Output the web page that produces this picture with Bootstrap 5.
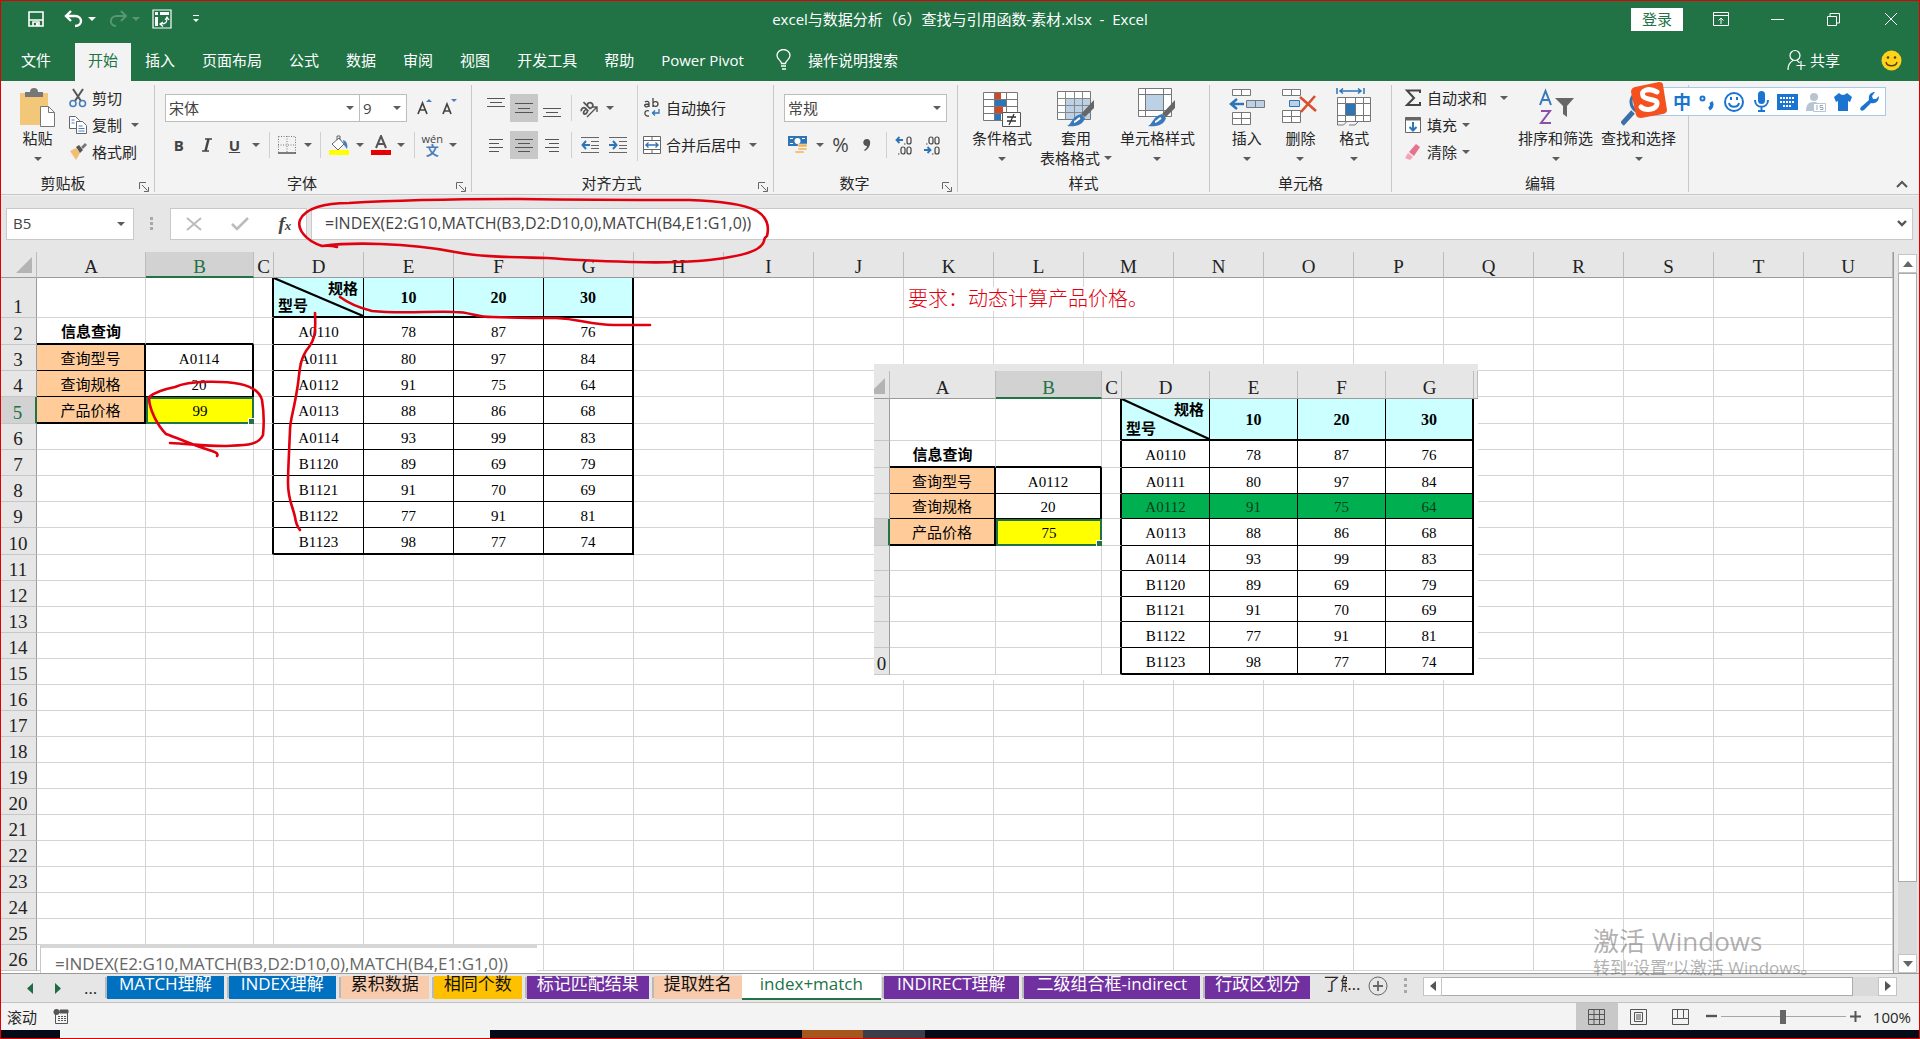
<!DOCTYPE html>
<html lang="zh-CN">
<head>
<meta charset="utf-8">
<meta name="viewport" content="width=device-width, initial-scale=1">
<title>excel与数据分析（6）查找与引用函数-素材.xlsx - Excel</title>
<link href="https://cdn.jsdelivr.net/npm/bootstrap@5.3.0/dist/css/bootstrap.min.css" rel="stylesheet">
<style>
:root{--xl:#217346;--chrome:#e6e6e6;--rib:#f3f3f3;--ink:#e0000f;}
body{font-family:"Open Sans","Noto Sans CJK SC",sans-serif;font-size:15px;line-height:20px;color:#262626;background:var(--chrome);overflow:hidden}
button,input,select{font:inherit;color:inherit}
button{background:none;border:0;padding:0;white-space:nowrap}
svg{display:block;flex:none}
.frame{border:1px solid #e00000;inset:0;z-index:40;pointer-events:none}
/* title bar */
.titlebar{background:var(--xl);color:#fff;height:38px;padding:0 22px 0 28px}
.titlebar .side{flex:1 1 0}
.titlebar .mid{margin:0 6px 0 0}
.signin{background:#fff;color:var(--xl);width:52px;height:23px;line-height:22px;margin-right:30px}
.winbtn{width:57px;height:30px}
.down{display:inline-block;border:4px solid transparent;border-top-color:currentColor;border-bottom:0;width:0;height:0;flex:none}
/* ribbon tabs */
.tabs{background:var(--xl);height:43px;padding:5px 18px 0 0;gap:1px}
.tabs a,.tabs .tell{color:#fff;text-decoration:none;padding:0 13px 4px;height:38px;display:flex;align-items:center}
.tabs a:first-child{padding:0 22px 4px 21px;margin-right:1px}
.tabs a.on{background:var(--rib);color:var(--xl)}
.tabs .share{margin-right:14px}
/* ribbon */
.ribbon{background:var(--rib);height:114px;border-bottom:1px solid #c6c6c6;padding:4px 0 2px}
.group{display:flex;flex-direction:column;position:relative;border-right:1px solid #c8c8c8;padding:0 10px}
.group .body{flex:1;display:flex}
.group .cap{text-align:center;height:18px;line-height:18px}
.launch{position:absolute;right:5px;bottom:0}
.g-clip{width:155px;padding-left:4px}.g-font{width:317px}.g-align{width:302px}.g-num{width:184px}
.g-font .cap,.g-align .cap,.g-num .cap,.g-clip .cap{padding-right:22px}
.g-style{width:252px}.g-cell{width:182px}.g-edit{width:297px}
.big{display:flex;flex-direction:column;align-items:center;padding-top:3px;color:#262626}
.big svg{margin-bottom:1px}
.big .down{margin-top:9px}
.down{color:#5c5c5c}.titlebar .down{color:#fff}
.stack3{margin-top:-1px}
.g-clip .stack3{margin-left:-2px}
.g-edit .stack3{width:106px;margin-left:2px;margin-right:8px}
.stack3 button{display:flex;align-items:center;height:27px;gap:5px}
.rows{display:flex;flex-direction:column;gap:9px;padding-top:9px}
.line{display:flex;height:28px;align-items:center}
.tool{width:28px;height:28px;display:flex;align-items:center;justify-content:center;color:#444}
.tool.w26{width:26px}.tool.car{width:16px}
.tool.hit{background:#c8c8c8}
.tool.pinyin{font-size:11px;line-height:9px}
.pinyin b{color:#4a7ebb;font-size:13px;line-height:14px}
.vsep{width:10px;height:26px;background:linear-gradient(#d0d0d0,#d0d0d0) center/1px 100% no-repeat;flex:none}
.vsep.tall{height:76px}
.pick{position:relative;height:28px;background:#fff;border:1px solid #bdbdbd;color:#444;flex:none}
.pick.face{width:195px}.pick.size{width:47px}
.pick select{appearance:none;border:0;background:none;width:100%;height:26px;padding:0 3px;outline:0}
.pick .down{position:absolute;right:5px;top:11px;pointer-events:none}
.pick+.pick{border-left:0}
/* formula bar */
.fbar{background:var(--chrome);padding:12px 7px 12px 6px;height:57px;border-top:1px solid #f0f0f0}
.fbox{background:#fff;border:1px solid #c9c9c9;height:32px;color:#444}
.fbox input{border:0;background:none;outline:0;width:100%;padding:0 0 2px 6px}
.fname{width:128px}.fbtns{width:137px}.ftext input{padding-left:13px;font-size:16px}
.fx{font:italic bold 19px "Liberation Serif",serif}.fx span{font-size:13px}
/* worksheet */
.sheet{position:relative;min-height:0;background:var(--chrome)}
.cells{position:relative;overflow:hidden;background:#fff;min-width:0;border-right:1px solid #9b9b9b}
.grid{table-layout:fixed;width:100%;border-collapse:separate;border-spacing:0;font-family:"Liberation Serif","Noto Sans CJK SC",serif;font-size:15px;line-height:18px;color:#000}
.grid td,.grid th{padding:0;border:0 solid #d4d4d4;border-width:0 1px 1px 0;text-align:center;vertical-align:middle;white-space:nowrap;font-weight:400;position:relative}
.grid td{padding-top:2px}
.grid thead th{background:var(--chrome);border-color:#b5b5b5 #bcbcbc #9b9b9b;font-size:19px;line-height:20px;vertical-align:bottom;color:#222}
.grid tbody th{background:var(--chrome);border-color:#c6c6c6 #9b9b9b #c6c6c6;font-size:19px;line-height:20px;vertical-align:bottom;color:#222}
.grid thead th.cur{background:#d2d2d2;color:var(--xl);border-bottom:2px solid var(--xl);line-height:19px}
.grid tbody th.cur{background:#d2d2d2;color:var(--xl);border-right:2px solid var(--xl)}
.grid .corner::after{content:"";position:absolute;right:4px;bottom:4px;border:8px solid transparent;border-right-color:#b4b4b4;border-bottom-color:#b4b4b4}
.grid td.t{border-color:#000}
.grid td.rt{border-right:2px solid #000}
.grid td.bt{border-bottom:2px solid #000}
.grid td.hd{background:#cff;font-weight:700;font-size:16px}
.grid td.or{background:#fc9}
.grid td.ye{background:#ff0;border:2px solid var(--xl);padding:0}
.grid td.ye::after{content:"";position:absolute;right:-3px;bottom:-3px;width:5px;height:5px;background:var(--xl);border:1px solid #fff;box-sizing:content-box}
.grid td.gr{background:#00b050;color:#0b3a1c}
.grid td.ttl{font-weight:700;border-bottom:2px solid #000}
.diag svg{position:absolute;inset:0;width:100%;height:100%}
.diag .up{position:absolute;right:5px;top:2px;font-size:15px}
.diag .lo{position:absolute;left:4px;bottom:1px;font-size:15px}
.grid td.ask{color:var(--ink);font-size:20px;font-weight:300;text-align:left;overflow:visible}
.ask span{position:absolute;left:4px;top:9px;background:#fff;line-height:24px;width:240px;z-index:1}
.shot{position:absolute;left:874px;top:112px;width:604px;background:#fff;border-top:7px solid var(--chrome);padding-bottom:5px;z-index:2;overflow:hidden}
.fshot{position:absolute;left:40px;top:692px;width:497px;height:40px;background:#fff;border-top:4px solid #d6d6d6;border-left:1px solid #c9c9c9;z-index:2;color:#666;font:17px/24px "Open Sans",sans-serif;padding:4px 0 0 14px;white-space:nowrap}
.vbar{width:26px;padding:2px 3px 0 4px}
.sbtn{background:#fff;border:1px solid #c4c4c4;width:19px;height:19px;display:flex;align-items:center;justify-content:center;flex:none;color:#666}
.vthumb{background:#fff;border:1px solid #ababab;flex:610 0 0}.vtrack{background:#dadada;flex:72 0 0}
/* sheet tabs */
.stabs{background:var(--chrome);height:30px;border-top:1px solid #9b9b9b;border-bottom:1px solid #c2c2c2;padding:0 23px 0 26px;font-size:17px}
.stabs .nav3{width:81px;gap:22px}
.stabs .tab{height:23px;line-height:15px;margin-top:2px;color:#fff;text-decoration:none;text-align:center;margin-right:5px;white-space:nowrap;padding:0 10px;box-shadow:-3px 0 0 -1px #b9b9b9;flex:none}
.stabs .blue{background:#0070c0;padding:0 12px}.stabs .peach{background:#f8cbad;color:#111}.stabs .gold{background:#ffc000;color:#111}.stabs .violet{background:#7030a0}.stabs .tab.wide{padding:0 13px}
.stabs .tab.now{background:#fff;color:var(--xl);margin:0 3px 0 -5px;height:26px;line-height:19px;border-bottom:2px solid var(--xl);padding:0 18px;box-shadow:none}
.stabs .cut{width:24px;line-height:20px;margin-left:8px;overflow:hidden;white-space:nowrap}
.hthumb{background:#fff;border:1px solid #ababab;border-left:0;height:19px;flex:401 0 0}.htrack{background:#dadada;height:19px;flex:25 0 0}
.status{background:var(--rib);height:27px;padding:0 9px 0 7px}
.vbtn{width:42px;height:27px;display:flex;align-items:center;justify-content:center;color:#555}
.vbtn.on{background:#c8c8c8}
.zoomer{appearance:none;width:125px;height:17px;background:linear-gradient(#a6a6a6,#a6a6a6) center/100% 1px no-repeat;margin:0 4px}
.zoomer::-webkit-slider-thumb{appearance:none;width:6px;height:14px;background:#666}
.taskbar{height:9px;background:#050a18}
.taskbar span{height:9px}
.taskbar .t1{width:60px}.taskbar .t2{width:430px;background:#eef4f4}.taskbar .t3{width:312px}.taskbar .t4{width:61px;background:#a4561c}.taskbar .t5{width:62px;background:#3b3d4a}
.ime{position:absolute;left:1630px;top:82px;z-index:20;color:#1b75d0}
.ime .strip{background:#fff;border:1px solid #a9c9ec;height:29px;margin:5px 0 0 -20px;padding:0 6px 0 24px;width:238px;font-weight:700;font-size:18px}
.wm{position:absolute;left:1593px;top:924px;z-index:30;color:rgba(110,110,110,.55);pointer-events:none}
.wm .a{font-size:26px;line-height:34px}.wm .b{font-size:17px;line-height:20px}
.marks{position:absolute;left:0;top:0;width:100%;height:100%;z-index:25;pointer-events:none;fill:none;stroke:var(--ink);stroke-width:2.6;stroke-linecap:round;stroke-linejoin:round}
</style>
<script src="https://cdn.jsdelivr.net/npm/bootstrap@5.3.0/dist/js/bootstrap.bundle.min.js"></script>
</head>
<body class="vh-100 d-flex flex-column position-relative">
<header>
 <div class="titlebar d-flex align-items-center">
  <div class="side d-flex align-items-center">
   <button aria-label="保存" class="me-3"><svg width="16" height="16" fill="none" stroke="#fff" stroke-width="1.6"><path d="M1 1h14v14H1zM1 9h14M5 15v-4h6v4"/><path d="M8 12h2v3H8z" fill="#fff" stroke="none"/></svg></button>
   <button aria-label="撤消" class="ms-1"><svg width="20" height="18" fill="none" stroke="#fff" stroke-width="2.4"><path d="M7 1 2 6l5 5M2 6h9c8 0 8 10 0 10"/></svg></button>
   <span class="down ms-1"></span>
   <button aria-label="恢复" class="ms-2 ps-1 opacity-25"><svg width="20" height="18" fill="none" stroke="#fff" stroke-width="2"><path d="M13 1l5 5-5 5M18 6H9C1 6 1 16 8 16"/></svg></button>
   <span class="down ms-1 opacity-25"></span>
   <button aria-label="数据透视表" class="ms-2 ps-1"><svg width="20" height="20" fill="none" stroke="#fff" stroke-width="1.2"><path d="M1 1h18v18H1z"/><path d="M3 3h3v3H3zM8 3h9v3H8zM3 8h3v9H3z" fill="#fff" stroke="none"/><path d="M15 9c0 4-1 6-6 6M13 11l2-3 2 3M11 13l-3 2 3 2.500"/></svg></button>
   <button aria-label="自定义快速访问工具栏" class="ms-3 ps-1"><svg width="8" height="9" fill="#fff"><path d="M1 0h6v1H1zM1 4h6L4 7z"/></svg></button>
  </div>
  <div class="mid">excel与数据分析（6）查找与引用函数-素材.xlsx&nbsp; -&nbsp; Excel</div>
  <div class="side d-flex align-items-center justify-content-end">
   <button class="signin">登录</button>
   <button class="winbtn" aria-label="功能区显示选项"><svg width="16" height="14" fill="none" stroke="#fff"><path d="M.5.500h15v13H.500zM.500 3.500h15M8 12V6M5.500 8.500 8 6l2.500 2.500"/></svg></button>
   <button class="winbtn" aria-label="最小化"><svg width="14" height="14" stroke="#fff"><path d="M1 7.500h13"/></svg></button>
   <button class="winbtn" aria-label="还原"><svg width="13" height="13" fill="none" stroke="#fff"><path d="M.500 3.500h9v9h-9zM3 3V.500h9.500v9.500H10"/></svg></button>
   <button aria-label="关闭"><svg width="14" height="14" stroke="#fff"><path d="M1 1l12 12M13 1 1 13"/></svg></button>
  </div>
 </div>
 <nav class="tabs d-flex">
  <a href="#">文件</a><a href="#" class="on">开始</a><a href="#">插入</a><a href="#">页面布局</a><a href="#">公式</a><a href="#">数据</a><a href="#">审阅</a><a href="#">视图</a><a href="#">开发工具</a><a href="#">帮助</a><a href="#">Power Pivot</a>
  <button class="tell ps-3"><svg class="me-2 pe-1" width="26" height="22" fill="none" stroke="#fff" stroke-width="1.300"><path d="M7.500 14.500c0-3-4.500-4-4.500-8a6.500 6 0 0 1 13 0c0 4-4.500 5-4.500 8zM7 17h5M8 20h4"/></svg>操作说明搜索</button>
  <button class="tell share ms-auto"><svg class="me-1" width="19" height="22" fill="none" stroke="#fff" stroke-width="1.200"><circle cx="8" cy="6.500" r="5"/><path d="M1 21c0-5 2-8 5-9.500M10 11.500c1 .5 2 1.500 2.500 2.500M14 12v9M9.500 16.500h9"/></svg>共享</button>
  <button class="tell pe-0" aria-label="反馈"><svg width="21" height="21"><circle cx="10.500" cy="10.500" r="10" fill="#ffd21c"/><path d="M5 12c1 5 10 5 11 0" fill="none" stroke="#5a4000" stroke-width="1.400"/><circle cx="7" cy="7.500" r="1.300" fill="#5a4000"/><circle cx="14" cy="7.500" r="1.300" fill="#5a4000"/></svg></button>
 </nav>
 <div class="ribbon d-flex">
  <section class="group g-clip"><div class="body">
   <button class="big px-3"><svg width="35" height="39"><path d="M0 5h28v32H0z" fill="#f2c777"/><path d="M5 9V4h5a4 4 0 0 1 8 0h5v5z" fill="#777"/><path d="M20.500 18.500h8l6 6v14h-14z" fill="#fff" stroke="#777"/><path d="M28.500 18.500v6h6" fill="none" stroke="#777"/></svg>粘贴<span class="down"></span></button>
   <div class="stack3">
    <button><svg width="18" height="20" fill="none"><path d="M4 1l8 12M14 1 6 13" stroke="#555" stroke-width="2"/><circle cx="4" cy="15.500" r="3" stroke="#4a7ebb" stroke-width="1.600"/><circle cx="13.500" cy="15.500" r="3" stroke="#4a7ebb" stroke-width="1.600"/></svg>剪切</button>
    <button><svg width="18" height="18" fill="#fff" stroke="#666"><path d="M.500.500h6l4 4v8H.500z"/><path d="M7.500 5.500h6l4 4v8h-10z"/><path d="M2.500 4h3M2.500 7h3M9.500 10h4M9.500 12.500h6M9.500 15h6" stroke="#4a7ebb"/></svg>复制<span class="down ms-1"></span></button>
    <button><svg width="18" height="17"><path d="M1 8l6-3 4 5-4 7z" fill="#f0c070"/><path d="M7 4l3-2 4 5-3 3z" fill="#555"/><path d="M12 4l4-4 2 2-4 4z" fill="#777"/></svg>格式刷</button>
   </div></div>
   <div class="cap">剪贴板</div><svg class="launch" width="10" height="10" fill="none" stroke="#666"><path d="M.500 7V.500H7M3 3l5.500 5.500M9.500 5v4.500H5"/></svg>
  </section>
  <section class="group g-font"><div class="body rows">
   <div class="line"><div class="pick face"><select aria-label="字体"><option>宋体</option></select><span class="down"></span></div><div class="pick size"><select aria-label="字号"><option>9</option></select><span class="down"></span></div>
    <button class="tool ms-1" aria-label="增大字号"><svg width="18" height="20" fill="none" stroke="#444" stroke-width="1.700"><path d="M3 16 7.500 5 12 16M4.500 12h6"/><path d="M11 4l3-3 3 3z" fill="#4a7ebb" stroke="none"/></svg></button>
    <button class="tool" aria-label="减小字号"><svg width="18" height="20" fill="none" stroke="#444" stroke-width="1.700"><path d="M3 16 7 6l4 10M4.500 13h5"/><path d="M11 1h6l-3 3z" fill="#4a7ebb" stroke="none"/></svg></button></div>
   <div class="line"><button class="tool fw-bold">B</button><button class="tool" aria-label="倾斜"><svg width="12" height="14" fill="none" stroke="#444"><path d="M4 1h7M1 13h7" stroke-width="1.300"/><path d="M7.500 1l-3 12" stroke-width="2.400"/></svg></button><button class="tool fw-bold text-decoration-underline">U</button><button class="tool car" aria-label="下划线选项"><span class="down"></span></button><span class="vsep"></span>
    <button class="tool w26" aria-label="边框"><svg width="18" height="18" stroke="#777" fill="none"><path d="M.500.500h17v17M.500.500v17M9 0v17M0 9h17" stroke-dasharray="1 1.500"/><path d="M0 17h18" stroke="#555" stroke-width="1.500"/></svg></button><button class="tool car" aria-label="边框选项"><span class="down"></span></button><span class="vsep"></span>
    <button class="tool w26" aria-label="填充颜色"><svg width="22" height="20"><path d="M4 9l7-6 5 6-6 6z" fill="#fff" stroke="#666"/><path d="M9 5V1h3v4" fill="none" stroke="#666"/><path d="M15 5c4 1 5 5 4 9l-3-4z" fill="#4a7ebb"/><path d="M1 15h20v5H1z" fill="#ff0"/></svg></button><button class="tool car" aria-label="填充选项"><span class="down"></span></button>
    <button class="tool w26" aria-label="字体颜色"><svg width="22" height="20"><path d="M6 13 11 1l5 12M8 9h6" fill="none" stroke="#555" stroke-width="2"/><path d="M1 15h20v5H1z" fill="#e60000"/></svg></button><button class="tool car" aria-label="颜色选项"><span class="down"></span></button><span class="vsep"></span>
    <button class="tool w26 flex-column pinyin">wén<b>文</b></button><button class="tool car" aria-label="拼音选项"><span class="down"></span></button></div></div>
   <div class="cap">字体</div><svg class="launch" width="10" height="10" fill="none" stroke="#666"><path d="M.500 7V.500H7M3 3l5.500 5.500M9.500 5v4.500H5"/></svg>
  </section>
  <section class="group g-align"><div class="body">
   <div class="rows">
    <div class="line"><button class="tool" aria-label="顶端对齐"><svg width="18" height="20" stroke="#555"><path d="M0 .500h18M3 4.500h12M0 8.500h18"/></svg></button><button class="tool hit" aria-label="垂直居中"><svg width="18" height="11" stroke="#555"><path d="M0 .500h18M3 5.500h12M0 9.500h18"/></svg></button><button class="tool" aria-label="底端对齐"><svg width="18" height="20" stroke="#555"><path d="M0 10.500h18M3 14.500h12M0 18.500h18"/></svg></button><span class="vsep"></span>
     <button class="tool w26" aria-label="方向"><svg width="20" height="20" fill="none" stroke="#555" stroke-width="1.700"><g transform="rotate(-45 8 9)"><path d="M1 8c1-2 5-2 5 1v4M6 10c-6-1-6 3-3 3 2 0 3-1 3-2M9 3v10M9 9c1-3 5-2 5 1s-4 4-5 1"/></g><path d="M8 19 18 9M18 14V9h-5" stroke-width="1.400"/></svg></button><button class="tool car" aria-label="方向选项"><span class="down"></span></button></div>
    <div class="line"><button class="tool" aria-label="左对齐"><svg width="14" height="14" stroke="#555"><path d="M0 1.500h14M0 5.500h10M0 9.500h14M0 13.500h10"/></svg></button><button class="tool hit" aria-label="居中"><svg width="18" height="14" stroke="#555"><path d="M0 1.500h18M3 5.500h12M0 9.500h18M3 13.500h12"/></svg></button><button class="tool" aria-label="右对齐"><svg width="14" height="14" stroke="#555"><path d="M0 1.500h14M4 5.500h10M0 9.500h14M4 13.500h10"/></svg></button><span class="vsep"></span>
     <button class="tool" aria-label="减少缩进"><svg width="18" height="18" fill="none" stroke="#666"><path d="M0 1.500h18M10 5.500h8M10 9.500h8M10 12.500h8M0 16.500h18"/><path d="M9 9H2M5 5 1.500 9 5 13" stroke="#2e75b6" stroke-width="2"/></svg></button><button class="tool" aria-label="增加缩进"><svg width="18" height="18" fill="none" stroke="#666"><path d="M0 1.500h18M10 5.500h8M10 9.500h8M10 12.500h8M0 16.500h18"/><path d="M0 9h7M4 5l3.500 4L4 13" stroke="#2e75b6" stroke-width="2"/></svg></button></div>
   </div>
   <span class="vsep tall"></span>
   <div class="rows">
    <div class="line"><button class="d-flex align-items-center gap-1"><svg width="20" height="20" fill="none" stroke="#444" stroke-width="1.300"><path d="M3 4c1-1 4-1 4 1v4M7 6C3 6 2 7 3 8c1 2 4 0 4-1M11 0v9M11 5c1-2 5-2 5 1s-4 3-5 1M7 13c-5-2-6 6 0 5"/><path d="M17 11v4h-6M13 12.500 10.500 15l2.500 2.500" stroke="#2e75b6"/></svg>自动换行</button></div>
    <div class="line"><button class="d-flex align-items-center gap-1"><svg width="20" height="20" fill="#fff" stroke="#666"><path d="M1.500 1.500h17v17h-17zM1.500 5.500h17M1.500 14.500h17M10 1.500v4M10 14.500v4"/><path d="M4 10h12M6.500 7.500 4 10l2.500 2.500M13.500 7.500 16 10l-2.500 2.500" stroke="#2e75b6" fill="none" stroke-width="1.400"/></svg>合并后居中</button><span class="down ms-2 me-0"></span></div>
   </div></div>
   <div class="cap">对齐方式</div><svg class="launch" width="10" height="10" fill="none" stroke="#666"><path d="M.500 7V.500H7M3 3l5.500 5.500M9.500 5v4.500H5"/></svg>
  </section>
  <section class="group g-num"><div class="body rows">
   <div class="line"><div class="pick w-100"><select aria-label="数字格式"><option>常规</option></select><span class="down"></span></div></div>
   <div class="line"><button class="tool" aria-label="会计数字格式"><svg width="20" height="20"><path d="M0 1h19v10H0z" fill="#2e75b6"/><circle cx="9.500" cy="6" r="3" fill="#fff"/><path d="M2 3h3v1H2zM14 3h3v1h-3zM2 8h3v1H2z" fill="#fff"/><path d="M10 9h9v3h-9zM10 13h9v2h-9zM7 16h9v2H7z" fill="#f0b458" stroke="#f3f3f3" stroke-width=".5"/></svg></button><button class="tool car" aria-label="会计选项"><span class="down"></span></button><button class="tool w26 fs-5">%</button><button class="tool" aria-label="千位分隔"><svg width="8" height="12" fill="#555"><path d="M4 0c5 0 4 9-2 12l-1-1c2-1 3-3 3-4C-1 7-1 0 4 0"/></svg></button><span class="vsep"></span>
    <button class="tool" aria-label="增加小数位数"><svg width="20" height="20" fill="none" stroke="#444" stroke-width="1.200"><rect x="12" y="2" width="4" height="7" rx="2"/><rect x="6" y="12" width="4" height="7" rx="2"/><rect x="12" y="12" width="4" height="7" rx="2"/><path d="M9 9h1.500M3 19h1.500"/><path d="M8 5H2M4.500 2 1.500 5l3 3" stroke="#2e75b6" stroke-width="1.800"/></svg></button><button class="tool" aria-label="减少小数位数"><svg width="20" height="20" fill="none" stroke="#444" stroke-width="1.200"><rect x="6" y="2" width="4" height="7" rx="2"/><rect x="12" y="2" width="4" height="7" rx="2"/><rect x="12" y="12" width="4" height="7" rx="2"/><path d="M3 9h1.500M9 19h1.500"/><path d="M1 15h6M4.500 12l3 3-3 3" stroke="#2e75b6" stroke-width="1.800"/></svg></button></div></div>
   <div class="cap">数字</div><svg class="launch" width="10" height="10" fill="none" stroke="#666"><path d="M.500 7V.500H7M3 3l5.500 5.500M9.500 5v4.500H5"/></svg>
  </section>
  <section class="group g-style"><div class="body justify-content-between px-1">
   <button class="big"><svg width="38" height="39"><path d="M.500 4.500h34v28H.500zM.500 11.500h34M.500 18.500h34M.500 25.500h34M11.500 4.500v28M23.500 4.500v28" fill="#fff" stroke="#777"/><path d="M12 5h6v6h-6z" fill="#d24726"/><path d="M12 12h11v6H12z" fill="#2e75b6"/><path d="M12 19h8v6h-8z" fill="#d24726"/><path d="M12 26h6v6h-6z" fill="#2e75b6"/><path d="M19.500 24.500h18v14h-18z" fill="#fff" stroke="#555"/><path d="M24 29h9M24 33h9M31 26l-5 11" stroke="#333" stroke-width="1.300"/></svg>条件格式<span class="down"></span></button>
   <button class="big"><svg width="38" height="39"><path d="M.500 3.500h33v28H.500z" fill="#fff" stroke="#777"/><path d="M9 11h24v20H9z" fill="#bcd0e6"/><path d="M.500 10.500h33M.500 17.500h33M.500 24.500h33M8.500 3.500v28M17.500 3.500v28M25.500 3.500v28" stroke="#888"/><path d="M37 12v8l-9 9-4-3z" fill="#666"/><path d="M24 26l4 4c-2 7-9 9-18 8 5-2 4-9 14-12" fill="#3b78b8"/><path d="M17 34c2 0 4-3 6-4" stroke="#fff" stroke-width="2" fill="none"/></svg>套用<span class="d-flex align-items-center gap-1">表格格式<i class="down m-0"></i></span></button>
   <button class="big"><svg width="38" height="39"><path d="M.500.500h33v28H.500zM7.500.500v28M25.500.500v28M.500 6.500h33M.500 22.500h33" fill="#fff" stroke="#777"/><path d="M8 7h17v15H8z" fill="#bcd0e6"/><path d="M37 12v8l-9 9-4-3z" fill="#666"/><path d="M24 26l4 4c-2 7-9 9-18 8 5-2 4-9 14-12" fill="#3b78b8"/><path d="M17 34c2 0 4-3 6-4" stroke="#fff" stroke-width="2" fill="none"/></svg>单元格样式<span class="down"></span></button></div>
   <div class="cap">样式</div>
  </section>
  <section class="group g-cell"><div class="body justify-content-around">
   <button class="big"><svg width="36" height="39" fill="#fff" stroke="#777"><path d="M3.500 1.500h18v6h-18zM12.500 1.500v6M3.500 24.500h18v12h-18zM12.500 24.500v12M3.500 30.500h18"/><path d="M17.500 12.500h18v7h-18zM26.500 12.500v7" fill="#bcd0e6"/><path d="M15 16H3M8 11l-6 5 6 5" fill="none" stroke="#2e75b6" stroke-width="2.500"/></svg>插入<span class="down"></span></button>
   <button class="big"><svg width="36" height="39" fill="#fff" stroke="#777"><path d="M.500 1.500h18v6H.500zM9.500 1.500v6M.500 22.500h18v12H.500zM9.500 22.500v12M.500 28.500h18"/><path d="M7.500 12.500h10v6h-10z" fill="#bcd0e6" stroke="#2e75b6"/><path d="M18 9l16 14M33 8 19 24" stroke="#d9512c" stroke-width="2.600"/></svg>删除<span class="down"></span></button>
   <button class="big"><svg width="36" height="39" fill="#fff" stroke="#777"><path d="M1.500 9.500h33v24h-33zM1.500 15.500h33M1.500 27.500h33M9.500 9.500v24M19.500 9.500v24M27.500 9.500v24"/><path d="M10 16h9v11h-9z" fill="#2e75b6" stroke="none"/><path d="M1.500 33v4h6l4-4M13 37h6l4-4" fill="none"/><path d="M1 0v6M28 0v6M4 3h21M7 .500 4 3l3 2.500M22 .500 25 3l-3 2.500" fill="none" stroke="#2e75b6" stroke-width="1.500"/></svg>格式<span class="down"></span></button></div>
   <div class="cap">单元格</div>
  </section>
  <section class="group g-edit"><div class="body">
   <div class="stack3">
    <button><svg width="18" height="18" fill="none" stroke="#444" stroke-width="2"><path d="M16 4V1.500H3L10 9l-7 7h13v-3"/></svg>自动求和<span class="down ms-2"></span></button>
    <button><svg width="18" height="18" fill="#fff" stroke="#666"><path d="M1.500 1.500h15v15h-15z"/><path d="M1 3h16" stroke-width="3"/><path d="M9 6v8M5.500 11 9 14.500l3.500-3.500" fill="none" stroke="#2e75b6" stroke-width="2"/></svg>填充<span class="down"></span></button>
    <button><svg width="18" height="16"><path d="M5 8l7-8 4 3-6 9z" fill="#e8718d"/><path d="M4 9l5 4-3 3-5-2z" fill="#f3a3b4"/></svg>清除<span class="down"></span></button>
   </div>
   <button class="big"><svg width="36" height="39" fill="none"><path d="M2 17 7.500 3 13 17M4 12h7" stroke="#3b78b8" stroke-width="2"/><path d="M3 23h9L3 35h10" stroke="#8a4fa8" stroke-width="2"/><path d="M17 10h19l-7 8v11l-4-3v-8z" fill="#666"/></svg>排序和筛选<span class="down"></span></button>
   <button class="big ms-2"><svg width="36" height="39" fill="none" stroke="#3b6fa8"><circle cx="20" cy="14" r="10" stroke-width="3"/><path d="M12 24 1 36" stroke-width="5"/></svg>查找和选择<span class="down"></span></button></div>
   <div class="cap">编辑</div>
  </section>
  <button class="ms-auto me-2 pe-1 align-self-end mb-1" aria-label="折叠功能区"><svg width="12" height="8" fill="none" stroke="#555" stroke-width="2"><path d="M1 7l5-5 5 5"/></svg></button>
 </div>
</header>
<div class="fbar d-flex">
 <div class="fbox fname d-flex align-items-center pe-2"><input aria-label="名称框" value="B5"><span class="down"></span></div>
 <svg class="mx-auto" width="36" height="32" fill="#a8a8a8"><path d="M16 9h3v3h-3zM16 14h3v3h-3zM16 19h3v3h-3z"/></svg>
 <div class="fbox fbtns d-flex align-items-center justify-content-around"><svg width="16" height="14" stroke="#bbb" stroke-width="2"><path d="M1 1l14 12M15 1 1 13"/></svg><svg width="18" height="14" fill="none" stroke="#bbb" stroke-width="2.600"><path d="M1 7l5 5L17 1"/></svg><i class="fx">f<span>x</span></i></div>
 <div class="fbox ftext d-flex align-items-center flex-grow-1 ms-1 pe-1"><input aria-label="编辑栏" value="=INDEX(E2:G10,MATCH(B3,D2:D10,0),MATCH(B4,E1:G1,0))"><svg width="12" height="8" fill="none" stroke="#555" stroke-width="2.400"><path d="M2 1l4 4 4-4"/></svg></div>
</div>
<main class="sheet d-flex flex-grow-1">
 <div class="cells flex-grow-1">
  <table class="grid" id="book"></table>
  <div class="shot"><table class="grid" id="copy"></table></div>
  <div class="fshot">=INDEX(E2:G10,MATCH(B3,D2:D10,0),MATCH(B4,E1:G1,0))</div>
 </div>
 <div class="vbar d-flex flex-column"><button class="sbtn" aria-label="向上"><svg width="10" height="6" fill="#666"><path d="M0 6l5-6 5 6z"/></svg></button><div class="vthumb"></div><div class="vtrack"></div><button class="sbtn" aria-label="向下"><svg width="10" height="6" fill="#666"><path d="M0 0h10L5 6z"/></svg></button></div>
</main>
<footer>
 <div class="stabs d-flex">
  <div class="nav3 d-flex align-items-center"><svg width="7" height="11" fill="#1f6b45"><path d="M7 0v11L1 5.500z"/></svg><svg width="7" height="11" fill="#1f6b45"><path d="M0 0v11l6-5.500z"/></svg><span>…</span></div>
  <a class="tab blue" href="#">MATCH理解</a><a class="tab blue" href="#">INDEX理解</a><a class="tab peach" href="#">累积数据</a><a class="tab gold" href="#">相同个数</a><a class="tab violet" href="#">标记匹配结果</a><a class="tab peach" href="#">提取姓名</a><a class="tab now" href="#">index+match</a><a class="tab violet wide" href="#">INDIRECT理解</a><a class="tab violet wide" href="#">二级组合框-indirect</a><a class="tab violet" href="#">行政区划分</a>
  <span class="cut">了解</span><span class="me-2">…</span>
  <div class="d-flex align-items-center ms-auto pb-1 flex-grow-1"><button class="me-3" aria-label="新工作表"><svg width="20" height="20" fill="none" stroke="#666"><circle cx="10" cy="10" r="9"/><path d="M10 5v10M5 10h10" stroke-width="1.800"/></svg></button><svg class="me-3" width="3" height="16" fill="#a8a8a8"><path d="M0 0h3v3H0zM0 6h3v3H0zM0 12h3v3H0z"/></svg>
   <button class="sbtn" aria-label="向左"><svg width="6" height="10"><path d="M6 0v10L0 5z" fill="#555"/></svg></button><div class="hthumb"></div><div class="htrack"></div><button class="sbtn" aria-label="向右"><svg width="6" height="10"><path d="M0 0v10l6-5z" fill="#555"/></svg></button></div>
 </div>
 <div class="status d-flex align-items-center">
  <span>滚动</span><svg class="ms-3" width="16" height="15" fill="none" stroke="#555"><path d="M2.500 3.500h12v11h-12z"/><path d="M7 1h8v3H7z" fill="#555"/><circle cx="3.500" cy="3" r="3" fill="#555" stroke="none"/><path d="M5 7.500h8M5 9.500h8M5 11.500h8" stroke-dasharray="2 1"/></svg>
  <button class="vbtn on ms-auto" aria-label="普通"><svg width="17" height="16" fill="none" stroke="#555"><path d="M.500.500h16v15H.500zM.500 5.500h16M.500 10.500h16M6 .500v15M11.500.500v15"/></svg></button>
  <button class="vbtn" aria-label="页面布局"><svg width="17" height="16" fill="none" stroke="#555"><path d="M.500.500h16v15H.500zM4.500 3.500h8v9h-8zM6 6h5M6 8h5M6 10h5"/></svg></button>
  <button class="vbtn" aria-label="分页预览"><svg width="17" height="16" fill="none" stroke="#555"><path d="M.500.500h16v15H.500zM5.500.500v9h6v-9M.500 9.500h5M11.500 9.500h5" /></svg></button>
  <button class="ms-1" aria-label="缩小"><svg width="11" height="11" stroke="#555" stroke-width="2.400"><path d="M0 5h11"/></svg></button><input class="zoomer" type="range" aria-label="缩放" min="0" max="100" value="50"><button class="me-2" aria-label="放大"><svg width="11" height="11" stroke="#555" stroke-width="2"><path d="M0 5.500h11M5.500 0v11"/></svg></button><span class="text-end ps-1">100%</span>
 </div>
 <div class="taskbar d-flex"><span class="t1"></span><span class="t2"></span><span class="t3"></span><span class="t4"></span><span class="t5"></span></div>
</footer>
<div class="ime d-flex"><svg class="position-relative" width="38" height="36"><path d="M5 5 29 0q4 0 4 3l4 25q0 3-4 4L11 36q-4 0-5-3L1 10q0-4 4-5" fill="#f4511e"/><path d="M27 10C18 5 10 9 13 14s15 2 14 8-12 7-16 3" fill="none" stroke="#fff" stroke-width="5" stroke-linecap="round"/></svg>
 <div class="strip d-flex align-items-center justify-content-between"><span>中</span>
  <svg width="16" height="18" fill="none" stroke="#1b75d0" stroke-width="2"><circle cx="3.500" cy="5.500" r="2"/><path d="M12 9c2 3 0 6-2 7" stroke-width="3.500"/></svg>
  <svg width="22" height="22" fill="none" stroke="#1b75d0" stroke-width="2"><circle cx="11" cy="11" r="9"/><path d="M6 12c1 5 9 5 10 0M8 6v3M14 6v3"/></svg>
  <svg width="17" height="21"><rect x="5" y="0" width="7" height="13" rx="3.500" fill="#1b75d0"/><path d="M2 9c0 9 13 9 13 0M8.500 15v5M5 20h7" fill="none" stroke="#1b75d0" stroke-width="2"/></svg>
  <svg width="21" height="16"><path d="M0 0h21v16H0z" fill="#1b75d0"/><path d="M3 4h15M3 8h15M6 12h9" stroke="#fff" stroke-width="2" stroke-dasharray="2 1"/></svg>
  <svg width="20" height="20" fill="#b8c4d2"><circle cx="8" cy="5" r="4"/><path d="M0 19c0-8 4-9 8-9s7 2 7 9z"/><path d="M7.500 11.500h12v8h-12z" fill="#fff" stroke="#b8c4d2"/><path d="M11 13v5M17 13.500h-3v2h3v2h-3" stroke="#9aa8b8" fill="none"/></svg>
  <svg width="18" height="18" fill="#1b75d0"><path d="M5 0q4 4 8 0l5 4-2 5-2-1v10H4V8L2 9 0 4z"/></svg>
  <svg width="19" height="19" fill="#1b75d0"><path d="M1 15 9 8c-1-5 2-8 6-8l-3 4 1 3 3 0 3-3c0 5-3 8-8 7l-7 7c-3 2-5-1-3-3"/></svg>
 </div></div>
<div class="wm"><div class="a">激活 Windows</div><div class="b">转到“设置”以激活 Windows。</div></div>
<svg class="marks">
 <path d="M337 247Q330 245 322 246C304 240 297 228 300 220C305 208 325 203 349 203C400 200 460 199 520 199C590 200 650 200 689 200C725 201 745 205 757 211C768 218 769 228 767 236Q764 238 764 241C762 249 748 254 730 257C705 262 670 263 631 262C600 261 575 260 547 258C510 257 480 257 455 252C435 248 410 245 380 244C355 243 338 244 322 246"/>
 <path d="M340 297Q352 306 372 311C400 314 430 311 455 312C470 312 476 317 492 317C520 318 540 318 556 318C580 319 590 325 614 325H650"/>
 <path d="M315 313C316 335 314 340 309 347C298 360 300 375 297 390C294 410 290 420 290 430C289 455 288 470 288 483C288 500 293 507 295 517Q296 525 300 530"/>
 <path d="M217 456Q219 453 212 451C195 446 180 439 166 434C158 426 149 410 149 397C155 392 165 389 175 387C190 380 225 381 240 384C254 387 260 392 262 400C264 412 264 425 263 435C258 446 245 445 223 446C205 446 190 444 170 443"/>
</svg>
<div class="frame position-absolute"></div>
<script>
const spec = [10, 20, 30];
const prices = [
  ['A0110', 78, 87, 76], ['A0111', 80, 97, 84], ['A0112', 91, 75, 64],
  ['A0113', 88, 86, 68], ['A0114', 93, 99, 83], ['B1120', 89, 69, 79],
  ['B1121', 91, 70, 69], ['B1122', 77, 91, 81], ['B1123', 98, 77, 74]
];
const labels = {2: '信息查询', 3: '查询型号', 4: '查询规格', 5: '产品价格'};
// o: column count and widths, row count and heights, query values, highlighted model, row header text
function build(id, o) {
  const L = 'ABCDEFGHIJKLMNOPQRSTU'.slice(0, o.cols).split('');
  let h = '<colgroup>' + o.w.map(w => w ? `<col style="width:${w}px">` : '<col>').join('') + '</colgroup>';
  h += `<thead><tr style="height:${o.head}px"><th class="corner"></th>` + L.map(c => `<th class="${c === 'B' ? 'cur' : ''}">${c}</th>`).join('') + (o.extra ? '<th></th>' : '') + '</tr></thead><tbody>';
  for (let r = 1; r <= o.rows; r++) {
    h += `<tr style="height:${o.h(r)}px"><th class="${r === 5 ? 'cur' : ''}">${o.num(r)}</th>`;
    for (const c of L) {
      let k = '', v = '';
      if (c === 'A' && labels[r]) { v = labels[r]; k = r === 2 ? 'ttl' : 't or rt' + (r === 5 ? ' bt' : ''); }
      if (c === 'B' && r === 2) k = 'bt';
      if (c === 'B' && r > 2 && r < 6) { v = o.q[r - 3]; k = r === 5 ? 'ye' : 't rt'; }
      if (c === 'C' && r <= 10) k = 'rt';
      const i = 'DEFG'.indexOf(c);
      if (i >= 0 && r <= 10) {
        k = 't' + (c === 'G' ? ' rt' : '') + (r === 1 || r === 10 ? ' bt' : '');
        if (r === 1) {
          k += ' hd' + (i ? '' : ' diag');
          v = i ? spec[i - 1] : '<svg viewBox="0 0 90 40" preserveAspectRatio="none"><path d="M0 0 90 40" stroke="#000" stroke-width="2.2"/></svg><span class="up">规格</span><span class="lo">型号</span>';
        } else {
          v = prices[r - 2][i];
          if (prices[r - 2][0] === o.hit) k += ' gr';
        }
      }
      if (c === 'K' && r === 1) { k = 'ask'; v = '<span>要求：动态计算产品价格。</span>'; }
      h += `<td class="${k}">${v}</td>`;
    }
    h += (o.extra ? '<td style="border:0"></td>' : '') + '</tr>';
  }
  document.getElementById(id).innerHTML = h + '</tbody>';
}
build('book', {cols: 21, rows: 26, head: 26, w: [37, 109, 108, 20, ...Array(16).fill(90), 90, 0],
  h: r => r === 1 ? 40 : [2, 5, 10].includes(r) ? 27 : 26, q: ['A0114', 20, 99], num: r => r});
build('copy', {cols: 7, rows: 10, head: 28, extra: true, w: [16, 106, 106, 20, 88, 88, 88, 88, 0],
  h: r => r === 1 ? 42 : [2, 5, 10].includes(r) ? 27 : r % 2 ? 26 : 25, q: ['A0112', 20, 75], hit: 'A0112', num: r => r === 10 ? '0' : ''});
</script>
</body>
</html>
